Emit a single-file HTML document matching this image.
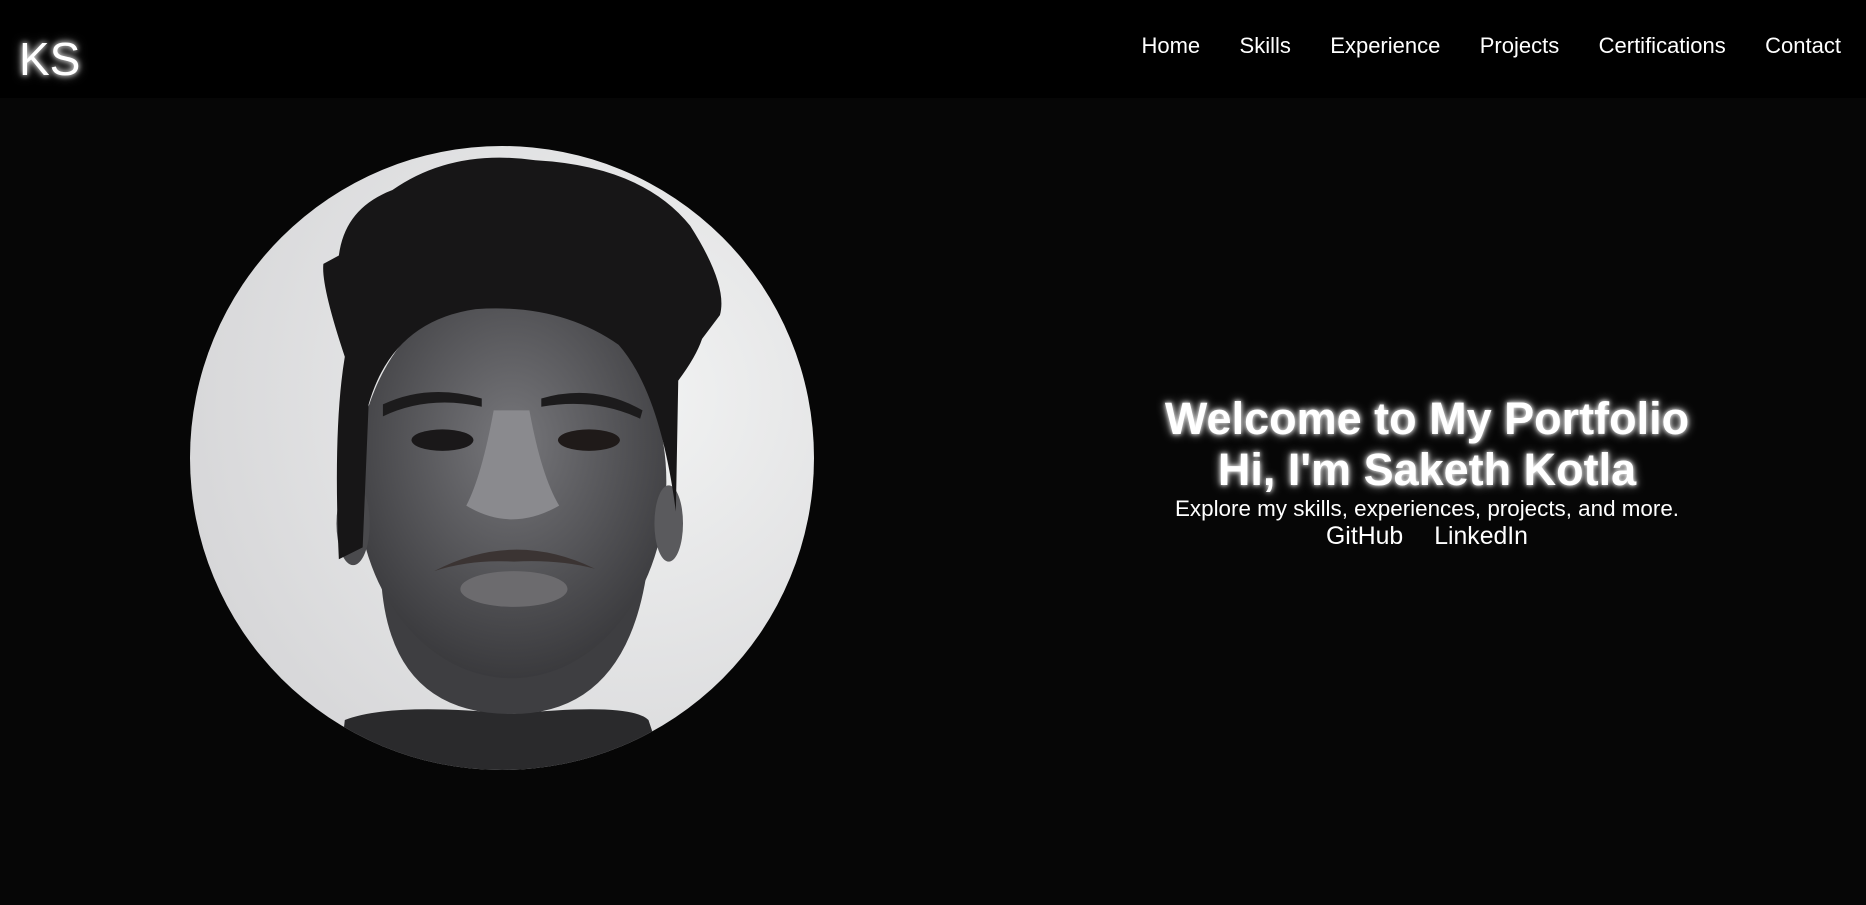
<!DOCTYPE html>
<html><head><meta charset="utf-8"><style>
html,body{margin:0;padding:0;width:1866px;height:905px;overflow:hidden;background:#060606;font-family:"Liberation Sans",Arial,sans-serif;color:#fff}
header{position:absolute;left:0;top:0;width:1866px;height:98px;background:#000}
.logo{position:absolute;left:19px;top:34px;font-size:46px;line-height:50px;text-shadow:0 0 6px #fff,0 0 10px rgba(255,255,255,.6)}
nav{position:absolute;right:25px;top:32px;font-size:22px;line-height:28px;display:flex;gap:39.4px}
.photo{position:absolute;left:190px;top:146px;width:624px;height:624px;border-radius:50%;overflow:hidden}
.hero{position:absolute;left:1127px;width:600px;top:393px;text-align:center}
h1{margin:0;font-size:45px;line-height:51px;font-weight:bold;text-shadow:0 0 5px #fff,0 0 10px rgba(255,255,255,.7)}
p{margin:0;font-size:22.4px;line-height:27px}
.links{font-size:24.8px;line-height:30px}
.links span{margin:0 15.5px}
</style></head><body>
<header><div class="logo">KS</div>
<nav><span>Home</span><span>Skills</span><span>Experience</span><span>Projects</span><span>Certifications</span><span>Contact</span></nav></header>
<div class="photo"><svg width="624" height="624" viewBox="160 123 524 524">
<defs>
<radialGradient id="bg" cx="0.7" cy="0.4" r="0.8"><stop offset="0" stop-color="#f2f3f3"/><stop offset="1" stop-color="#d4d4d6"/></radialGradient>
<radialGradient id="face" cx="0.5" cy="0.4" r="0.6"><stop offset="0" stop-color="#77777b"/><stop offset="1" stop-color="#3a3a3d"/></radialGradient>
</defs>
<rect x="160" y="123" width="524" height="524" fill="url(#bg)"/>
<path d="M285 650 L290 605 Q330 590 430 600 Q530 590 545 605 L560 650 Z" fill="#2a2a2c"/>
<path d="M320 470 Q320 600 430 600 Q530 600 545 470 Z" fill="#3e3e41"/>
<ellipse cx="430" cy="405" rx="130" ry="165" fill="url(#face)"/>
<ellipse cx="297" cy="440" rx="14" ry="35" fill="#4a4a4d"/>
<ellipse cx="562" cy="440" rx="12" ry="32" fill="#5a5a5d"/>
<path d="M285 470 Q280 360 290 300 Q270 240 272 222 L285 215 Q290 175 330 160 Q380 125 450 135 Q540 140 580 190 Q612 240 605 265 L590 285 Q585 300 570 320 L568 430 Q555 330 520 290 Q470 255 400 260 Q330 270 310 340 L305 460 Z" fill="#171617"/>
<path d="M322 340 Q360 322 405 335 L405 342 Q360 332 322 350 Z" fill="#1c1b1c"/>
<path d="M455 335 Q500 322 540 345 L538 352 Q500 334 455 342 Z" fill="#1c1b1c"/>
<ellipse cx="372" cy="370" rx="26" ry="9" fill="#1a1819"/>
<ellipse cx="495" cy="370" rx="26" ry="9" fill="#1f1a19"/>
<path d="M415 345 Q405 400 392 425 Q430 448 470 425 Q455 400 445 345 Z" fill="#8a8a8e"/>
<path d="M365 480 Q432 445 500 478 Q470 470 432 472 Q395 470 365 480 Z" fill="#3b3433"/>
<ellipse cx="432" cy="495" rx="45" ry="15" fill="#6c6b6e"/>
</svg></div>
<div class="hero">
<h1>Welcome to My Portfolio</h1>
<h1>Hi, I'm Saketh Kotla</h1>
<p>Explore my skills, experiences, projects, and more.</p>
<div class="links"><span>GitHub</span><span>LinkedIn</span></div>
</div>
</body></html>
